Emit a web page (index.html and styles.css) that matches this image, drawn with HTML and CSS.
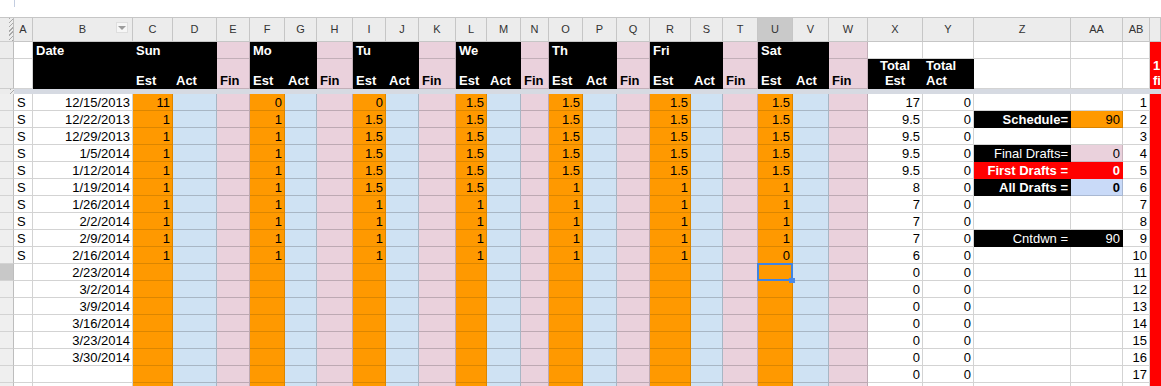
FILE: index.html
```html
<!DOCTYPE html>
<html>
<head>
<meta charset="utf-8">
<link rel="stylesheet" href="styles.css">
</head>
<body>
<div class="sheet">
  <div class="topbar"><span class="caret"></span></div>

  <div class="r colhdr">
    <i class="hatch"></i><i>A</i><i>B<span class="flt"></span></i><i>C</i><i>D</i><i>E</i><i>F</i><i>G</i><i>H</i><i>I</i><i>J</i><i>K</i><i>L</i><i>M</i><i>N</i><i>O</i><i>P</i><i>Q</i><i>R</i><i>S</i><i>T</i><i class="cur">U</i><i>V</i><i>W</i><i>X</i><i>Y</i><i>Z</i><i>AA</i><i>AB</i><i></i>
  </div>

  <div class="r h1">
    <i></i><i></i><i class="k">Date</i><i class="k">Sun</i><i class="k"></i><i class="p"></i><i class="k">Mo</i><i class="k"></i><i class="p"></i><i class="k">Tu</i><i class="k"></i><i class="p"></i><i class="k">We</i><i class="k"></i><i class="p"></i><i class="k">Th</i><i class="k"></i><i class="p"></i><i class="k">Fri</i><i class="k"></i><i class="p"></i><i class="k">Sat</i><i class="k"></i><i class="p"></i><i></i><i></i><i></i><i></i><i></i><i class="xr"></i>
  </div>

  <div class="r h2">
    <i></i><i></i><i class="k"></i><i class="k">Est</i><i class="k">Act</i><i class="p">Fin</i><i class="k">Est</i><i class="k">Act</i><i class="p">Fin</i><i class="k">Est</i><i class="k">Act</i><i class="p">Fin</i><i class="k">Est</i><i class="k">Act</i><i class="p">Fin</i><i class="k">Est</i><i class="k">Act</i><i class="p">Fin</i><i class="k">Est</i><i class="k">Act</i><i class="p">Fin</i><i class="k">Est</i><i class="k">Act</i><i class="p">Fin</i><i class="k two ctr">Total<br>Est</i><i class="k two">Total<br>Act</i><i></i><i></i><i></i><i class="xr two">1st<br>fin</i>
  </div>

  <div class="r divider"><i class="hatch"></i><i class="band"></i></div>

  <div class="r d"><i></i><i>S</i><i>12/15/2013</i><i>11</i><i></i><i></i><i>0</i><i></i><i></i><i>0</i><i></i><i></i><i>1.5</i><i></i><i></i><i>1.5</i><i></i><i></i><i>1.5</i><i></i><i></i><i>1.5</i><i></i><i></i><i>17</i><i>0</i><i></i><i></i><i>1</i><i></i></div>
  <div class="r d"><i></i><i>S</i><i>12/22/2013</i><i>1</i><i></i><i></i><i>1</i><i></i><i></i><i>1.5</i><i></i><i></i><i>1.5</i><i></i><i></i><i>1.5</i><i></i><i></i><i>1.5</i><i></i><i></i><i>1.5</i><i></i><i></i><i>9.5</i><i>0</i><i class="k bold">Schedule=</i><i class="xo">90</i><i>2</i><i></i></div>
  <div class="r d"><i></i><i>S</i><i>12/29/2013</i><i>1</i><i></i><i></i><i>1</i><i></i><i></i><i>1.5</i><i></i><i></i><i>1.5</i><i></i><i></i><i>1.5</i><i></i><i></i><i>1.5</i><i></i><i></i><i>1.5</i><i></i><i></i><i>9.5</i><i>0</i><i></i><i></i><i>3</i><i></i></div>
  <div class="r d"><i></i><i>S</i><i>1/5/2014</i><i>1</i><i></i><i></i><i>1</i><i></i><i></i><i>1.5</i><i></i><i></i><i>1.5</i><i></i><i></i><i>1.5</i><i></i><i></i><i>1.5</i><i></i><i></i><i>1.5</i><i></i><i></i><i>9.5</i><i>0</i><i class="k">Final Drafts=</i><i class="xp">0</i><i>4</i><i></i></div>
  <div class="r d"><i></i><i>S</i><i>1/12/2014</i><i>1</i><i></i><i></i><i>1</i><i></i><i></i><i>1.5</i><i></i><i></i><i>1.5</i><i></i><i></i><i>1.5</i><i></i><i></i><i>1.5</i><i></i><i></i><i>1.5</i><i></i><i></i><i>9.5</i><i>0</i><i class="xr bold">First Drafts =</i><i class="xr bold">0</i><i>5</i><i></i></div>
  <div class="r d"><i></i><i>S</i><i>1/19/2014</i><i>1</i><i></i><i></i><i>1</i><i></i><i></i><i>1.5</i><i></i><i></i><i>1.5</i><i></i><i></i><i>1</i><i></i><i></i><i>1</i><i></i><i></i><i>1</i><i></i><i></i><i>8</i><i>0</i><i class="k bold">All Drafts =</i><i class="xb bold">0</i><i>6</i><i></i></div>
  <div class="r d"><i></i><i>S</i><i>1/26/2014</i><i>1</i><i></i><i></i><i>1</i><i></i><i></i><i>1</i><i></i><i></i><i>1</i><i></i><i></i><i>1</i><i></i><i></i><i>1</i><i></i><i></i><i>1</i><i></i><i></i><i>7</i><i>0</i><i></i><i></i><i>7</i><i></i></div>
  <div class="r d"><i></i><i>S</i><i>2/2/2014</i><i>1</i><i></i><i></i><i>1</i><i></i><i></i><i>1</i><i></i><i></i><i>1</i><i></i><i></i><i>1</i><i></i><i></i><i>1</i><i></i><i></i><i>1</i><i></i><i></i><i>7</i><i>0</i><i></i><i></i><i>8</i><i></i></div>
  <div class="r d"><i></i><i>S</i><i>2/9/2014</i><i>1</i><i></i><i></i><i>1</i><i></i><i></i><i>1</i><i></i><i></i><i>1</i><i></i><i></i><i>1</i><i></i><i></i><i>1</i><i></i><i></i><i>1</i><i></i><i></i><i>7</i><i>0</i><i class="k">Cntdwn =</i><i class="k">90</i><i>9</i><i></i></div>
  <div class="r d"><i></i><i>S</i><i>2/16/2014</i><i>1</i><i></i><i></i><i>1</i><i></i><i></i><i>1</i><i></i><i></i><i>1</i><i></i><i></i><i>1</i><i></i><i></i><i>1</i><i></i><i></i><i>0</i><i></i><i></i><i>6</i><i>0</i><i></i><i></i><i>10</i><i></i></div>
  <div class="r d"><i class="on"></i><i></i><i>2/23/2014</i><i></i><i></i><i></i><i></i><i></i><i></i><i></i><i></i><i></i><i></i><i></i><i></i><i></i><i></i><i></i><i></i><i></i><i></i><i class="sel"></i><i></i><i></i><i>0</i><i>0</i><i></i><i></i><i>11</i><i></i></div>
  <div class="r d"><i></i><i></i><i>3/2/2014</i><i></i><i></i><i></i><i></i><i></i><i></i><i></i><i></i><i></i><i></i><i></i><i></i><i></i><i></i><i></i><i></i><i></i><i></i><i></i><i></i><i></i><i>0</i><i>0</i><i></i><i></i><i>12</i><i></i></div>
  <div class="r d"><i></i><i></i><i>3/9/2014</i><i></i><i></i><i></i><i></i><i></i><i></i><i></i><i></i><i></i><i></i><i></i><i></i><i></i><i></i><i></i><i></i><i></i><i></i><i></i><i></i><i></i><i>0</i><i>0</i><i></i><i></i><i>13</i><i></i></div>
  <div class="r d"><i></i><i></i><i>3/16/2014</i><i></i><i></i><i></i><i></i><i></i><i></i><i></i><i></i><i></i><i></i><i></i><i></i><i></i><i></i><i></i><i></i><i></i><i></i><i></i><i></i><i></i><i>0</i><i>0</i><i></i><i></i><i>14</i><i></i></div>
  <div class="r d"><i></i><i></i><i>3/23/2014</i><i></i><i></i><i></i><i></i><i></i><i></i><i></i><i></i><i></i><i></i><i></i><i></i><i></i><i></i><i></i><i></i><i></i><i></i><i></i><i></i><i></i><i>0</i><i>0</i><i></i><i></i><i>15</i><i></i></div>
  <div class="r d"><i></i><i></i><i>3/30/2014</i><i></i><i></i><i></i><i></i><i></i><i></i><i></i><i></i><i></i><i></i><i></i><i></i><i></i><i></i><i></i><i></i><i></i><i></i><i></i><i></i><i></i><i>0</i><i>0</i><i></i><i></i><i>16</i><i></i></div>
  <div class="r d"><i></i><i></i><i></i><i></i><i></i><i></i><i></i><i></i><i></i><i></i><i></i><i></i><i></i><i></i><i></i><i></i><i></i><i></i><i></i><i></i><i></i><i></i><i></i><i></i><i>0</i><i>0</i><i></i><i></i><i>17</i><i></i></div>
  <div class="r d"><i></i><i></i><i></i><i></i><i></i><i></i><i></i><i></i><i></i><i></i><i></i><i></i><i></i><i></i><i></i><i></i><i></i><i></i><i></i><i></i><i></i><i></i><i></i><i></i><i></i><i></i><i></i><i></i><i></i><i></i></div>
</div>
</body>
</html>
```

FILE: styles.css
```css
* { box-sizing: border-box; }
html, body { margin: 0; padding: 0; background: #fff; }
body {
  width: 1161px;
  height: 386px;
  overflow: hidden;
  font-family: "Liberation Sans", Arial, sans-serif;
  font-size: 13px;
  color: #000;
}
.sheet { width: 1161px; }

.topbar { height: 18px; border-bottom: 1px solid #c6c6c6; }
.topbar .caret { display: block; width: 1px; height: 7px; margin-left: 14px; background: #c3cde0; }

.r {
  display: grid;
  grid-template-columns: 14px 19px 100px 40px 44px 33px 35px 32px 36px 33px 33px 37px 31px 34px 28px 34px 34px 33px 41px 32px 35px 35px 36px 39px 55px 51px 97px 52px 27px 11px;
}
.r > i {
  font-style: normal;
  display: block;
  background: #fff;
  border-right: 1px solid #d3d3d3;
  border-bottom: 1px solid #d3d3d3;
  white-space: nowrap;
  overflow: hidden;
  padding: 1px 3px 0 3px;
  line-height: 16px;
}
.r > i:first-child { background: #ececec; border-color: #cdcdcd; border-right-color: #bdbdbd; }

/* column letters */
.colhdr { height: 24px; }
.colhdr > i {
  background: #ececec;
  border-color: #c6c6c6;
  text-align: center;
  font-size: 11px;
  line-height: 23px;
  padding: 0;
  color: #333;
  position: relative;
}
.colhdr > i.cur { background: #c9c9c9; }
.hatch {
  background: repeating-linear-gradient(135deg, #a8a8a8 0 1px, #ececec 1px 3px) right top / 4px 100% no-repeat, #ececec !important;
}
.flt {
  position: absolute;
  right: 4px;
  top: 4px;
  width: 12px;
  height: 11px;
  background: #f6f6f6;
  border: 1px solid #dedede;
}
.flt::after {
  content: "";
  position: absolute;
  left: 1px;
  top: 3px;
  border-left: 4px solid transparent;
  border-right: 4px solid transparent;
  border-top: 4px solid #9c9c9c;
}

/* header rows */
.h1 { height: 17px; }
.h2 { height: 30px; }
.h1 > i, .h2 > i { font-weight: bold; text-align: left; }
.h2 > i {
  display: flex;
  flex-direction: column;
  justify-content: flex-end;
  line-height: 14px;
  padding: 0 3px;
}
.h2 > i.two { line-height: 15px; }
.h2 > i.ctr { text-align: center; padding: 0; }

.k { background: #000 !important; color: #fff; border-color: #000 !important; }
.p { background: #ead1dc !important; border-color: #c2afb8 !important; }
.xr { background: #ff0000 !important; color: #fff; border-color: #ff0000 !important; }
.xo { background: #ff9900 !important; border-color: #d98300 !important; }
.xp { background: #ead1dc !important; border-color: #c9b4bd !important; }
.xb { background: #c9daf8 !important; border-color: #a9b8d2 !important; }
.bold { font-weight: bold; }

/* frozen divider */
.divider { height: 5px; }
.divider > i { padding: 0; border: 0; }
.divider > i.band { grid-column: 2 / -1; background: #d6dae2; }

/* data rows */
.d { height: 17px; }
.d > i { text-align: right; padding: 1px 2px 0 3px; }
.d > i:nth-child(2) { text-align: left; }
.d > i:nth-child(3n+4):nth-child(-n+22) { background: #ff9900; border-color: #dc8600; }
.d > i:nth-child(3n+5):nth-child(-n+23) { background: #cfe2f3; border-color: #a8b6c4; }
.d > i:nth-child(3n+6):nth-child(-n+24) { background: #ead1dc; border-color: #bda9b3; }
.d > i:nth-child(30) { background: #ff0000; border-color: #ff0000; }
.d > i:first-child { background: #efefef; border-color: #d3d3d3; border-right-color: #bdbdbd; }
.d > i.on { background: #c8c8c8; }

.d > i.sel { position: relative; overflow: visible; }
.sel::before {
  content: "";
  position: absolute;
  left: -1px;
  top: -1px;
  right: -1px;
  bottom: -1px;
  border: 2px solid #4084e2;
}
.sel::after {
  content: "";
  position: absolute;
  right: -3px;
  bottom: -3px;
  width: 6px;
  height: 5px;
  background: #4a8ae8;
}
```
